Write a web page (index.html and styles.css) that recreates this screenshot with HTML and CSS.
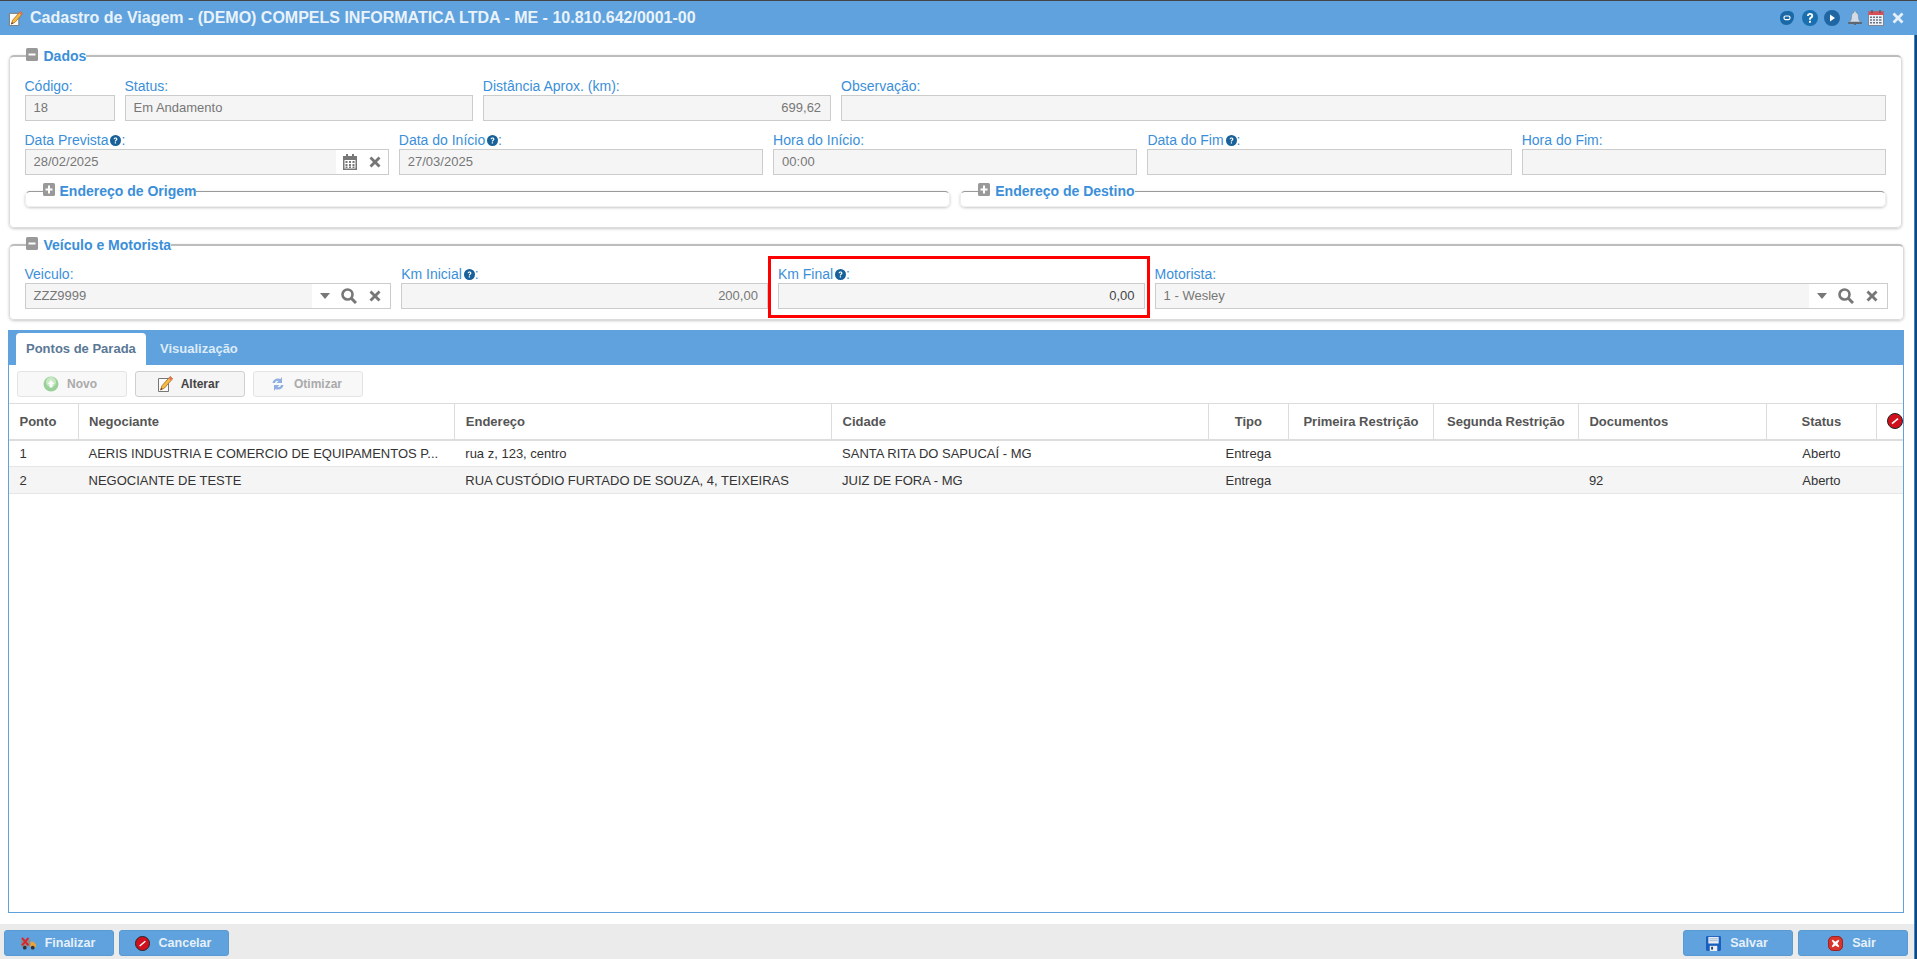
FILE: index.html
```html
<!DOCTYPE html>
<html lang="pt-BR">
<head>
<meta charset="utf-8">
<title>Cadastro de Viagem</title>
<link rel="stylesheet" href="styles.css">
</head>
<body>
<svg class="defs" width="0" height="0" aria-hidden="true">
  <symbol id="i-help" viewBox="0 0 12 12"><circle cx="6" cy="6" r="6" fill="#17609a"/><path d="M3.900 4.600C4 3.300 4.900 2.700 6 2.700c1.200 0 2.100.7 2.100 1.800 0 1.600-1.600 1.500-1.600 2.700H5.200c0-1.900 1.500-1.900 1.500-2.700 0-.4-.3-.7-.8-.7s-.7.3-.8.8zM5.200 8h1.400v1.400H5.200z" fill="#fff"/></symbol>
  <symbol id="i-minus" viewBox="0 0 12 13"><rect width="12" height="13" rx="1.500" fill="#999"/><rect x="2.500" y="5.500" width="7" height="2" fill="#fff"/></symbol>
  <symbol id="i-plus" viewBox="0 0 12 13"><rect width="12" height="13" rx="1.500" fill="#999"/><path d="M5 2.500h2v3h2.500v2H7v3H5v-3H2.500v-2H5z" fill="#fff"/></symbol>
  <symbol id="i-x" viewBox="0 0 12 12"><path d="M.5 2.500l2-2L6 4 9.500.5l2 2L8 6l3.500 3.500-2 2L6 8l-3.500 3.500-2-2L4 6z" fill="#777"/></symbol>
  <symbol id="i-cal" viewBox="0 0 14 16"><path d="M3 0h2v2h4V0h2v2h3v14H0V2h3z" fill="#777"/><path d="M1.500 6h11v8.500h-11z" fill="#fff"/><path d="M2.500 7h2v2h-2zm3.500 0h2v2H6zm3.500 0h2v2h-2zm-7 3h2v2h-2zm3.500 0h2v2H6zm3.500 0h2v2h-2zM2.500 12.500h2v1.500h-2zm3.500 0h2v1.500H6zm3.500 0h2v1.500h-2z" fill="#777"/></symbol>
  <symbol id="i-caret" viewBox="0 0 10 6"><path d="M0 0h10L5 6z" fill="#777"/></symbol>
  <symbol id="i-search" viewBox="0 0 16 16"><circle cx="6.500" cy="6.500" r="5" fill="none" stroke="#777" stroke-width="2.600"/><path d="M10 10l5 5" stroke="#777" stroke-width="3"/></symbol>
  <symbol id="i-pencil" viewBox="0 0 16 16"><path d="M1.500 2.500h10v13h-10z" fill="#fbfbfb" stroke="#777"/><path d="M13.200.5l2.400 2.200L7.500 12 3.500 14 5 9.700z" fill="#f6bb45" stroke="#a8661a" stroke-width=".8"/><path d="M13.200.5l2.400 2.200-1.500 1.700-2.400-2.200z" fill="#e2725e"/><path d="M3.500 14l.7-2 1.300 1.100z" fill="#333"/></symbol>
  <symbol id="i-stop" viewBox="0 0 16 16"><circle cx="8" cy="8" r="7.500" fill="#d0101c" stroke="#222"/><path d="M4.500 10l6-5 1 1.200-6 5z" fill="#fff"/></symbol>
</svg>

<div class="window">
  <header class="titlebar">
    <svg class="title-icon"><use href="#i-pencil"/></svg>
    <h1 class="title">Cadastro de Viagem - (DEMO) COMPELS INFORMATICA LTDA - ME - 10.810.642/0001-00</h1>
    <div class="title-tools">
      <svg class="tool t-chat" viewBox="0 0 14 14"><path d="M7 0c4.500 0 7 1.200 7 5.500S11 14 6.500 14 0 11 0 7 2.500 0 7 0z" fill="#1a68a6"/><rect x="4" y="5" width="6" height="3.600" rx="1.500" fill="none" stroke="#fff" stroke-width="1.200"/></svg>
      <svg class="tool t-help" viewBox="0 0 16 16"><circle cx="8" cy="8" r="8" fill="#1a6fae"/><path d="M4.900 6.100C5 4 6.300 3 8.100 3c1.800 0 3.100 1.100 3.100 2.700 0 2.400-2.400 2.300-2.400 4.100H7c0-2.900 2.200-2.800 2.200-4 0-.6-.5-1-1.100-1-.8 0-1.200.5-1.300 1.300zM7 10.700h1.900v2H7z" fill="#fff"/></svg>
      <svg class="tool t-play" viewBox="0 0 16 16"><circle cx="8" cy="8" r="8" fill="#1f66a3"/><path d="M6 4.500l5 3.500-5 3.500z" fill="#fff"/></svg>
      <svg class="tool t-bell" viewBox="0 0 14 14"><path d="M6 0h2v1.500C10 2 10.500 4 10.500 6.500c0 2 1 3.500 2 4.500h-11c1-1 2-2.500 2-4.500C3.500 4 4 2 6 1.500z" fill="#d3dce6" stroke="#7b8794" stroke-width=".6"/><rect x="0" y="11" width="14" height="2" rx=".8" fill="#5d6873"/><rect x="6" y="13" width="2" height="1" fill="#5d6873"/></svg>
      <svg class="tool t-cal" viewBox="0 0 16 16"><rect x=".5" y="1.500" width="15" height="14" fill="#eef1f5" stroke="#7d8796"/><rect x=".5" y="1.500" width="15" height="3.500" fill="#d6505c"/><path d="M4 0v3M12 0v3" stroke="#555" stroke-width="1.200"/><path d="M2 6.500h2V8H2zm3 0h2V8H5zm3 0h2V8H8zm3 0h2.500V8H11zM2 9.200h2v1.500H2zm3 0h2v1.500H5zm3 0h2v1.500H8zm3 0h2.500v1.500H11zM2 12h2v1.500H2zm3 0h2v1.500H5zm3 0h2v1.500H8zm3 0h2.500v1.500H11z" fill="#6a7486"/></svg>
      <svg class="tool t-close" viewBox="0 0 12 12"><path d="M.5 2.500l2-2L6 4 9.500.5l2 2L8 6l3.500 3.500-2 2L6 8l-3.500 3.500-2-2L4 6z" fill="#e6f0fa"/></svg>
    </div>
  </header>

  <div class="window-body">
    <main class="content">
      <fieldset class="group group-dados">
        <legend class="legend"><svg class="toggle"><use href="#i-minus"/></svg>Dados</legend>
        <div class="row row-a">
          <div class="field"><label>Código:</label><div class="input">18</div></div>
          <div class="field"><label>Status:</label><div class="input">Em Andamento</div></div>
          <div class="field"><label>Distância Aprox. (km):</label><div class="input right">699,62</div></div>
          <div class="field"><label>Observação:</label><div class="input"></div></div>
        </div>
        <div class="row row-b">
          <div class="field">
            <label>Data Prevista <svg class="help"><use href="#i-help"/></svg>:</label>
            <div class="input has-addons"><span class="value">28/02/2025</span>
              <span class="addons addons-date"><svg class="ico-cal"><use href="#i-cal"/></svg><svg class="ico-x"><use href="#i-x"/></svg></span>
            </div>
          </div>
          <div class="field"><label>Data do Início <svg class="help"><use href="#i-help"/></svg>:</label><div class="input">27/03/2025</div></div>
          <div class="field"><label>Hora do Início:</label><div class="input">00:00</div></div>
          <div class="field"><label>Data do Fim <svg class="help"><use href="#i-help"/></svg>:</label><div class="input"></div></div>
          <div class="field"><label>Hora do Fim:</label><div class="input"></div></div>
        </div>
        <div class="row row-c">
          <fieldset class="subgroup"><legend class="legend"><svg class="toggle"><use href="#i-plus"/></svg>Endereço de Origem</legend></fieldset>
          <fieldset class="subgroup"><legend class="legend"><svg class="toggle"><use href="#i-plus"/></svg>Endereço de Destino</legend></fieldset>
        </div>
      </fieldset>

      <fieldset class="group group-veiculo">
        <legend class="legend"><svg class="toggle"><use href="#i-minus"/></svg>Veículo e Motorista</legend>
        <div class="row row-d">
          <div class="field">
            <label>Veiculo:</label>
            <div class="input has-addons"><span class="value">ZZZ9999</span>
              <span class="addons addons-lookup"><svg class="ico-caret"><use href="#i-caret"/></svg><svg class="ico-search"><use href="#i-search"/></svg><svg class="ico-x"><use href="#i-x"/></svg></span>
            </div>
          </div>
          <div class="field"><label>Km Inicial <svg class="help"><use href="#i-help"/></svg>:</label><div class="input right">200,00</div></div>
          <div class="field highlighted"><label>Km Final <svg class="help"><use href="#i-help"/></svg>:</label><div class="input right dark">0,00</div></div>
          <div class="field">
            <label>Motorista:</label>
            <div class="input has-addons"><span class="value">1 - Wesley</span>
              <span class="addons addons-lookup"><svg class="ico-caret"><use href="#i-caret"/></svg><svg class="ico-search"><use href="#i-search"/></svg><svg class="ico-x"><use href="#i-x"/></svg></span>
            </div>
          </div>
        </div>
      </fieldset>

      <section class="tabpanel">
        <nav class="tabs">
          <a class="tab active">Pontos de Parada</a>
          <a class="tab">Visualização</a>
        </nav>
        <div class="toolbar">
          <button class="tbtn" disabled>
            <svg class="tbtn-ico" viewBox="0 0 16 16"><circle cx="8" cy="8" r="7.500" fill="#5cb85c"/><circle cx="8" cy="6" r="5" fill="#a9e0a0"/><path d="M8 4l3.500 4H9.500v3.500h-3V8H4.500z" fill="#fff"/></svg>Novo</button>
          <button class="tbtn enabled">
            <svg class="tbtn-ico"><use href="#i-pencil"/></svg>Alterar</button>
          <button class="tbtn" disabled>
            <svg class="tbtn-ico" viewBox="0 0 16 16"><path d="M2.500 7C3 4 5.300 2.500 8 2.500c1 0 1.800.2 2.500.6L12 1v6H6.500l2-2C7 4.500 5.500 5 5 7z" fill="#4a7fd6"/><path d="M13.500 9c-.5 3-2.800 4.500-5.500 4.500-1 0-1.800-.2-2.500-.6L4 15V9h5.500l-2 2c1.500.5 3 0 3.500-2z" fill="#4a7fd6"/></svg>Otimizar</button>
        </div>
        <table class="grid">
          <colgroup>
            <col class="c-ponto"><col class="c-wide"><col class="c-wide"><col class="c-wide"><col class="c-tipo"><col class="c-restr"><col class="c-restr"><col class="c-doc"><col class="c-status"><col>
          </colgroup>
          <thead>
            <tr>
              <th>Ponto</th><th>Negociante</th><th>Endereço</th><th>Cidade</th><th class="ctr">Tipo</th><th class="ctr">Primeira Restrição</th><th class="ctr">Segunda Restrição</th><th>Documentos</th><th class="ctr">Status</th>
              <th class="th-icon"><svg class="stop-mini"><use href="#i-stop"/></svg></th>
            </tr>
          </thead>
          <tbody>
            <tr>
              <td>1</td><td>AERIS INDUSTRIA E COMERCIO DE EQUIPAMENTOS P...</td><td>rua z, 123, centro</td><td>SANTA RITA DO SAPUCAÍ - MG</td><td class="ctr">Entrega</td><td></td><td></td><td></td><td class="ctr">Aberto</td><td></td>
            </tr>
            <tr class="alt">
              <td>2</td><td>NEGOCIANTE DE TESTE</td><td>RUA CUSTÓDIO FURTADO DE SOUZA, 4, TEIXEIRAS</td><td>JUIZ DE FORA - MG</td><td class="ctr">Entrega</td><td></td><td></td><td>92</td><td class="ctr">Aberto</td><td></td>
            </tr>
          </tbody>
        </table>
      </section>
    </main>

    <footer class="footer">
      <div class="btn-group">
        <button class="fbtn">
          <svg class="fbtn-ico" viewBox="0 0 16 14"><rect x="0" y="3" width="10" height="7" fill="#8c8c8c"/><path d="M10 5h3.500L16 8v3H10z" fill="#e8a33a"/><circle cx="4" cy="11.500" r="2" fill="#333"/><circle cx="12.500" cy="11.500" r="2" fill="#333"/><path d="M1 1l7 8M8 1L1 9" stroke="#d9262c" stroke-width="2.200"/></svg>Finalizar</button>
        <button class="fbtn"><svg class="fbtn-ico"><use href="#i-stop"/></svg>Cancelar</button>
      </div>
      <div class="btn-group">
        <button class="fbtn">
          <svg class="fbtn-ico" viewBox="0 0 16 16"><path d="M0 1.500A1.500 1.500 0 0 1 1.500 0h13A1.500 1.500 0 0 1 16 1.500v13a1.500 1.500 0 0 1-1.500 1.500h-13A1.500 1.500 0 0 1 0 14.500z" fill="#1a5fc0"/><path d="M2.500 1h11v7h-11z" fill="#e8edf4"/><path d="M3.500 3h9M3.500 5h9" stroke="#9fb4d0"/><path d="M4 10.500h8V16H4z" fill="#e8edf4"/><rect x="5.500" y="11.500" width="2" height="3" fill="#28416e"/></svg>Salvar</button>
        <button class="fbtn">
          <svg class="fbtn-ico" viewBox="0 0 16 16"><rect x=".5" y=".5" width="15" height="15" rx="5" fill="#d9342b" stroke="#9d1c17"/><path d="M5 4l3 2 3-2 1 1-2 3 2 3-1 1-3-2-3 2-1-1 2-3-2-3z" fill="#fff"/></svg>Sair</button>
      </div>
    </footer>
  </div>
</div>
</body>
</html>
```

FILE: styles.css
```css
* { box-sizing: border-box; }
html, body { margin: 0; height: 100%; overflow: hidden; }
body { font-family: "Liberation Sans", Arial, sans-serif; font-size: 13px; color: #333; background: #fff; }
.defs { position: absolute; }

.window { height: 959px; display: flex; flex-direction: column; border-top: 1px solid #444; }

/* title bar */
.titlebar { height: 34px; flex: none; display: flex; align-items: center; padding: 0 13px 0 8px; background: #5fa2dd; }
.title-icon { width: 15px; height: 15px; margin-right: 7px; flex: none; }
.title { margin: 0; flex: 1; font-size: 16px; font-weight: bold; color: #eaf3fb; white-space: nowrap; }
.title-tools { display: flex; align-items: center; }
.tool { display: block; flex: none; }
.t-chat { width: 14px; height: 14px; margin-right: 8px; }
.t-help { width: 16px; height: 16px; margin-right: 6px; }
.t-play { width: 16px; height: 16px; margin-right: 8px; }
.t-bell { width: 14px; height: 14px; margin-right: 6px; }
.t-cal { width: 16px; height: 16px; margin-right: 8px; }
.t-close { width: 12px; height: 12px; }

.window-body { flex: 1; min-height: 0; display: flex; flex-direction: column; padding-right: 3px; box-shadow: inset -2px 0 0 #12487c, inset -3px 0 0 #3f86c8; }
.content { flex: 1; min-height: 0; display: flex; flex-direction: column; padding: 13px 10px 11px 8px; }

/* fieldsets */
.group, .subgroup { margin: 0; min-width: 0; background: #fff; border: 1px solid #dcdcdc; border-top: 2px solid #bdbdbd; border-radius: 5px; box-shadow: 0 1px 3px rgba(0,0,0,.22); }
.group { margin-left: 1px; padding: 13px 15px 10px 14.500px; }
.group-dados { margin-right: 2px; height: 180px; }
.group-veiculo { margin-top: 9px; height: 83px; padding-top: 12px; }
.legend { padding: 0; margin-left: 1px; display: flex; align-items: center; font-size: 14px; font-weight: bold; color: #3b8fd9; line-height: 16px; }
.subgroup .legend { margin-left: 17px; }
.toggle { width: 12px; height: 13px; margin-right: 6px; position: relative; top: -2px; }
.subgroup .toggle { margin-right: 5px; }

.row { display: grid; column-gap: 10px; }
.row-a { grid-template-columns: 90px 1fr 1fr 3fr; }
.row-b { grid-template-columns: repeat(5, 1fr); margin-top: 10px; }
.row-c { grid-template-columns: 1fr 1fr; margin-top: 8px; }
.row-d { grid-template-columns: 1fr 1fr 1fr 2fr; }

.subgroup { padding: 0; height: 24px; border-top-width: 1px; border-color: #eee; border-top-color: #999; }

.field { min-width: 0; }
.field label { display: block; height: 18px; line-height: 18px; color: #3b8fd9; font-size: 14px; white-space: nowrap; }
.help { width: 11px; height: 11px; margin-left: -2px; vertical-align: -1px; }
.input { height: 26px; line-height: 24px; padding: 0 9px 0 8px; background: #f5f5f5; border: 1px solid #ccc; color: #777; font-size: 13px; white-space: nowrap; overflow: hidden; }
.input.right { text-align: right; }
.input.dark { color: #444; }
.input.has-addons { display: flex; padding: 0 0 0 8px; }
.value { flex: 1; min-width: 0; }
.addons { flex: none; display: flex; align-items: center; background: #fff; height: 100%; }
.addons-date { width: 52px; padding-left: 7px; }
.addons-lookup { width: 78px; padding-left: 8px; }
.ico-cal { width: 14px; height: 16px; margin-right: 12px; }
.ico-x { width: 12px; height: 12px; }
.ico-caret { width: 10px; height: 6px; margin-right: 11px; }
.ico-search { width: 16px; height: 16px; margin-right: 12px; }

/* highlight around Km Final */
.highlighted { position: relative; }
.highlighted::after { content: ""; position: absolute; left: -10px; right: -5px; top: -9px; bottom: -9px; border: 3px solid #f00; pointer-events: none; }

/* tabs panel */
.tabpanel { flex: 1; min-height: 0; margin-top: 10px; display: flex; flex-direction: column; border: 1px solid #5fa2dd; border-top: 0; }
.tabs { height: 35px; flex: none; display: flex; align-items: flex-end; padding-left: 7px; background: #5fa2dd; }
.tab { height: 32px; line-height: 32px; padding: 0 10px 0 11px; font-size: 13px; font-weight: bold; color: #dcebf8; margin-right: 3px; white-space: nowrap; }
.tab.active { width: 130px; padding: 0 0 0 10px; background: #fff; color: #5a7896; border-radius: 4px 4px 0 0; }
.toolbar { height: 38px; flex: none; display: flex; gap: 8px; padding: 6px 8px; }
.tbtn { width: 110px; height: 26px; display: flex; align-items: center; justify-content: center; gap: 8px; padding: 0 4px 0 0; background: #f8f8f8; border: 1px solid #e4e4e4; border-radius: 3px; font: bold 12px "Liberation Sans", Arial, sans-serif; color: #aaa; }
.tbtn.enabled { background: #f5f5f5; border-color: #d0d0d0; color: #444; }
.tbtn[disabled] .tbtn-ico { opacity: .6; }
.tbtn-ico { width: 16px; height: 16px; flex: none; }

.grid { width: 100%; table-layout: fixed; border-collapse: collapse; font-size: 13px; }
.c-ponto { width: 69px; }
.c-wide { width: 376.800px; }
.c-tipo { width: 80px; }
.c-restr { width: 145px; }
.c-doc { width: 188px; }
.c-status { width: 110px; }
.grid th { height: 36px; padding: 0 10px 0 10.500px; text-align: left; font-weight: bold; color: #555; border-top: 1px solid #ddd; border-left: 1px solid #ddd; border-bottom: 2px solid #ddd; white-space: nowrap; overflow: hidden; }
.grid th:first-child { border-left: 0; }
.grid td { height: 27px; padding: 0 10px 0 10.500px; color: #333; border-bottom: 1px solid #e6e6e6; white-space: nowrap; overflow: hidden; }
.grid .ctr { text-align: center; padding: 0; }
.alt td { background: #f5f5f5; }
.th-icon { padding: 0 0 0 10px !important; overflow: visible; }
.stop-mini { width: 16px; height: 16px; display: block; }

/* footer */
.footer { height: 35px; flex: none; display: flex; justify-content: space-between; padding: 6px 6px 3px 4px; background: #ebebeb; }
.btn-group { display: flex; gap: 5px; }
.fbtn { width: 110px; height: 26px; display: flex; align-items: center; justify-content: center; gap: 9px; padding: 0 2px 0 0; background: #5fa2dd; border: 1px solid #5a9ad3; border-radius: 3px; font: bold 12.500px "Liberation Sans", Arial, sans-serif; color: #e6f0fa; }
.fbtn-ico { width: 15px; height: 15px; flex: none; }
```
